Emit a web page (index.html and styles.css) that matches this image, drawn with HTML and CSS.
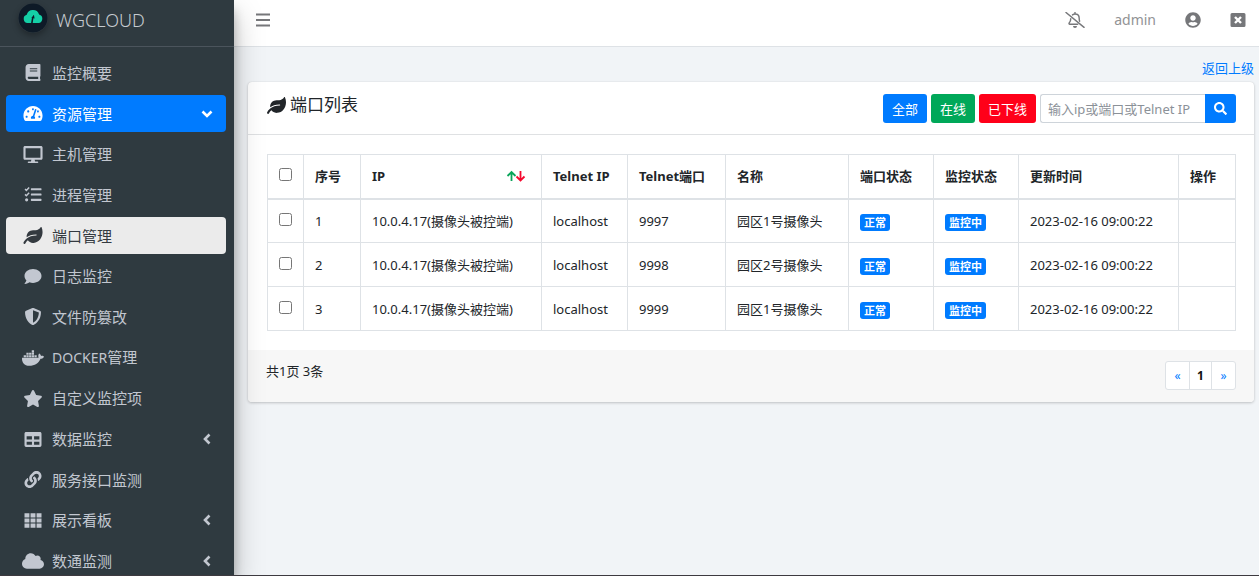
FILE: index.html
```html
<!DOCTYPE html>
<html lang="zh-CN">
<head>
<meta charset="utf-8">
<meta name="viewport" content="width=device-width, initial-scale=1">
<title>WGCLOUD</title>
<link rel="stylesheet" href="styles.css">
</head>
<body>
<svg class="sprite" aria-hidden="true">
  <symbol id="leaf" viewBox="0 0 576 512"><path d="M546.2 9.7c-5.6-12.5-21.6-13-28.3-1.2C486.9 62.4 431.4 96 368 96h-80C182 96 96 182 96 288c0 7 .8 13.7 1.5 20.5C161.3 262.8 253.4 224 384 224c8.8 0 16 7.2 16 16s-7.2 16-16 16C132.6 256 26 410.1 2.4 468c-6.6 16.3 1.2 34.9 17.5 41.6 16.4 6.8 35-1.1 41.8-17.3 1.5-3.6 20.9-47.9 71.9-90.6 32.4 43.9 94 85.8 174.9 77.2C465.5 467.5 576 326.7 576 154.3c0-50.2-10.8-102.2-29.8-144.6z"/></symbol>
  <symbol id="angle-left" viewBox="0 0 10 16"><path d="M7.5 3.5 3 8l4.500 4.500" fill="none" stroke="currentColor" stroke-width="2.600"/></symbol>
  <symbol id="cloud" viewBox="0 0 640 512"><path d="M537.6 226.6c4.1-10.7 6.4-22.4 6.400-34.600 0-53-43-96-96-96-19.700 0-38.100 6-53.300 16.200C367 64.200 315.300 32 256 32c-88.400 0-160 71.600-160 160 0 2.700.1 5.400.2 8.100C40.200 219.800 0 273.200 0 336c0 79.500 64.500 144 144 144h368c70.700 0 128-57.300 128-128 0-61.900-44-113.600-102.400-125.400z"/></symbol>
</svg>
<div class="app">
  <aside class="sidebar">
    <a class="brand" href="#">
      <svg class="logo" viewBox="0 0 30 30" aria-hidden="true"><circle cx="15" cy="15" r="14.500" fill="#0e1a27"/><path d="M9.500 20a4.200 4.200 0 0 1-.8-8.200 6.500 6.500 0 0 1 12.400-.4A4.400 4.400 0 0 1 20.500 20z" fill="#14cfa6"/><path d="m13.300 15 2.600-3.200.7 3.800-1.200-.3-.7 4.700h-1.600l.8-4.900z" fill="#0e1a27"/></svg>
      <span>WGCLOUD</span>
    </a>
    <nav class="menu">
      <a class="item" href="#"><svg class="icon" viewBox="0 0 448 512"><path d="M448 360V24c0-13.300-10.700-24-24-24H96C43 0 0 43 0 96v320c0 53 43 96 96 96h328c13.300 0 24-10.700 24-24v-16c0-7.500-3.500-14.300-8.900-18.700-4.200-15.400-4.200-59.300 0-74.700 5.400-4.300 8.900-11.100 8.900-18.600zM128 134c0-3.300 2.700-6 6-6h212c3.300 0 6 2.700 6 6v20c0 3.300-2.700 6-6 6H134c-3.300 0-6-2.700-6-6v-20zm0 64c0-3.300 2.700-6 6-6h212c3.300 0 6 2.700 6 6v20c0 3.300-2.700 6-6 6H134c-3.300 0-6-2.700-6-6v-20zm253.400 250H96c-17.700 0-32-14.300-32-32 0-17.600 14.400-32 32-32h285.400c-1.900 17.100-1.900 46.900 0 64z"/></svg><span>监控概要</span></a>
      <a class="item item-open" href="#"><svg class="icon" viewBox="0 0 576 512"><path d="M288 32C128.940 32 0 160.940 0 320c0 52.800 14.250 102.260 39.060 144.800 5.610 9.620 16.300 15.200 27.440 15.200h443c11.140 0 21.830-5.580 27.440-15.200C561.750 422.260 576 372.800 576 320c0-159.060-128.940-288-288-288zm0 64c14.710 0 26.580 10.130 30.320 23.650-1.110 2.260-2.640 4.230-3.450 6.670l-9.220 27.670c-5.130 3.490-10.970 6.010-17.640 6.010-17.670 0-32-14.330-32-32S270.330 96 288 96zM96 384c-17.670 0-32-14.330-32-32s14.330-32 32-32 32 14.330 32 32-14.330 32-32 32zm48-160c-17.670 0-32-14.330-32-32s14.330-32 32-32 32 14.330 32 32-14.330 32-32 32zm246.770-72.410l-61.330 184C343.130 347.330 352 364.540 352 384c0 11.720-3.380 22.550-8.880 32H232.880c-5.500-9.450-8.880-20.280-8.880-32 0-33.940 26.500-61.430 59.900-63.590l61.340-184.010c4.170-12.560 17.730-19.450 30.360-15.170 12.570 4.190 19.350 17.790 15.170 30.360zm14.660 57.200l15.520-46.550c3.470-1.290 7.130-2.230 11.050-2.230 17.670 0 32 14.330 32 32s-14.330 32-32 32c-11.380-.01-20.890-6.280-26.570-15.220zM480 384c-17.670 0-32-14.330-32-32s14.330-32 32-32 32 14.330 32 32-14.330 32-32 32z"/></svg><span>资源管理</span><svg class="arrow arrow-down"><use href="#angle-left"/></svg></a>
      <a class="item" href="#"><svg class="icon" viewBox="0 0 576 512"><path d="M528 0H48C21.500 0 0 21.500 0 48v320c0 26.500 21.500 48 48 48h192l-16 48h-72c-13.300 0-24 10.700-24 24s10.700 24 24 24h272c13.300 0 24-10.700 24-24s-10.700-24-24-24h-72l-16-48h192c26.500 0 48-21.500 48-48V48c0-26.500-21.500-48-48-48zm-16 352H64V64h448v288z"/></svg><span>主机管理</span></a>
      <a class="item" href="#"><svg class="icon" viewBox="0 0 512 512"><path d="M208 64h288a16 16 0 0 1 16 16v32a16 16 0 0 1-16 16H208a16 16 0 0 1-16-16V80a16 16 0 0 1 16-16zm0 160h288a16 16 0 0 1 16 16v32a16 16 0 0 1-16 16H208a16 16 0 0 1-16-16v-32a16 16 0 0 1 16-16zm0 160h288a16 16 0 0 1 16 16v32a16 16 0 0 1-16 16H208a16 16 0 0 1-16-16v-32a16 16 0 0 1 16-16z"/><circle cx="64" cy="416" r="48"/><path d="m16 92 40 40 84-88M16 252l40 40 84-88" fill="none" stroke="currentColor" stroke-width="44"/></svg><span>进程管理</span></a>
      <a class="item item-current" href="#" aria-current="page"><svg class="icon"><use href="#leaf"/></svg><span>端口管理</span></a>
      <a class="item" href="#"><svg class="icon" viewBox="0 0 512 512"><path d="M256 32C114.600 32 0 125.100 0 240c0 49.600 21.400 95 57 130.700C44.500 421.100 2.700 466 2.200 466.500c-2.200 2.300-2.800 5.700-1.500 8.700S4.800 480 8 480c66.300 0 116-31.800 140.600-51.400 32.700 12.300 69 19.400 107.400 19.400 141.400 0 256-93.100 256-208S397.400 32 256 32z"/></svg><span>日志监控</span></a>
      <a class="item" href="#"><svg class="icon" viewBox="0 0 512 512"><path d="M466.500 83.700l-192-80a48.150 48.150 0 0 0-36.900 0l-192 80C27.700 91.100 16 108.600 16 128c0 198.500 114.500 335.700 221.500 380.300 11.800 4.900 25.100 4.900 36.900 0C360.100 472.600 496 349.300 496 128c0-19.400-11.700-36.900-29.500-44.300zM256.100 446.300l-.1-381 175.900 73.300c-3.300 151.400-82.100 261.100-175.800 307.700z"/></svg><span>文件防篡改</span></a>
      <a class="item" href="#"><svg class="icon icon-wide" viewBox="0 0 640 512"><path d="M349.900 236.300h-66.100v-59.400h66.100v59.400zm0-204.300h-66.100v60.700h66.100V32zm78.200 144.800H362v59.400h66.100v-59.400zm-156.300-72.100h-66.100v60.100h66.100v-60.100zm78.100 0h-66.100v60.100h66.100v-60.100zm276.800 100c-14.400-9.700-47.600-13.200-73.100-8.400-3.300-24-16.700-44.900-41.100-63.700l-14-9.300-9.300 14c-18.400 27.800-23.400 73.600-3.700 103.800-8.700 4.700-25.800 11.100-48.400 10.700H2.400c-8.700 50.800 5.800 116.800 44 162.100 37.100 43.900 92.700 66.200 165.400 66.200 157.400 0 273.900-72.500 328.400-204.200 21.400.4 67.600.1 91.300-45.200 1.500-2.500 6.600-13.200 8.500-17.100l-13.300-8.900zm-511.100-27.900h-66v59.400h66.100v-59.400zm78.100 0h-66.100v59.400h66.100v-59.400zm78.100 0h-66.100v59.400h66.100v-59.400zm-78.100-72.100h-66.100v60.100h66.100v-60.100z"/></svg><span><span class="latin">DOCKER</span>管理</span></a>
      <a class="item" href="#"><svg class="icon" viewBox="0 0 576 512"><path d="M259.300 17.800L194 150.200 47.900 171.500c-26.200 3.800-36.700 36.100-17.700 54.600l105.700 103-25 145.500c-4.500 26.300 23.200 46 46.400 33.700L288 439.600l130.700 68.700c23.200 12.200 50.900-7.400 46.400-33.700l-25-145.500 105.700-103c19-18.500 8.500-50.800-17.700-54.600L382 150.200 316.700 17.800c-11.700-23.600-45.600-23.900-57.400 0z"/></svg><span>自定义监控项</span></a>
      <a class="item" href="#"><svg class="icon" viewBox="0 0 512 512"><path d="M464 32H48C21.490 32 0 53.490 0 80v352c0 26.510 21.490 48 48 48h416c26.510 0 48-21.490 48-48V80c0-26.510-21.490-48-48-48zM224 416H64v-96h160v96zm0-160H64v-96h160v96zm224 160H288v-96h160v96zm0-160H288v-96h160v96z"/></svg><span>数据监控</span><svg class="arrow"><use href="#angle-left"/></svg></a>
      <a class="item" href="#"><svg class="icon" viewBox="0 0 512 512"><path d="M326.612 185.391c59.747 59.809 58.927 155.698.36 214.590-.11.12-.24.25-.36.37l-67.200 67.200c-59.270 59.270-155.699 59.262-214.960 0-59.270-59.260-59.270-155.700 0-214.960l37.106-37.106c9.840-9.840 26.786-3.300 27.294 10.606.648 17.722 3.826 35.527 9.690 52.721 1.986 5.822.567 12.262-3.783 16.612l-13.087 13.087c-28.026 28.026-28.905 73.660-1.155 101.960 28.024 28.579 74.086 28.749 102.325.51l67.200-67.190c28.191-28.191 28.073-73.757 0-101.830-3.701-3.694-7.429-6.564-10.341-8.569a16.037 16.037 0 0 1-6.947-12.606c-.396-10.567 3.348-21.456 11.698-29.806l21.054-21.055c5.521-5.521 14.182-6.199 20.584-1.731a152.482 152.482 0 0 1 20.522 17.197zM467.547 44.449c-59.261-59.262-155.690-59.270-214.960 0l-67.200 67.200c-.12.12-.25.25-.36.37-58.566 58.892-59.387 154.781.36 214.590a152.454 152.454 0 0 0 20.521 17.196c6.402 4.468 15.064 3.789 20.584-1.731l21.054-21.055c8.350-8.350 12.094-19.239 11.698-29.806a16.037 16.037 0 0 0-6.947-12.606c-2.912-2.005-6.640-4.875-10.341-8.569-28.073-28.073-28.191-73.639 0-101.830l67.200-67.190c28.239-28.239 74.300-28.069 102.325.51 27.750 28.300 26.872 73.934-1.155 101.960l-13.087 13.087c-4.350 4.350-5.769 10.790-3.783 16.612 5.864 17.194 9.042 34.999 9.690 52.721.509 13.906 17.454 20.446 27.294 10.606l37.106-37.106c59.271-59.259 59.271-155.699.001-214.959z"/></svg><span>服务接口监测</span></a>
      <a class="item" href="#"><svg class="icon" viewBox="0 0 512 512"><path d="M0 40h148v124H0zm182 0h148v124H182zm182 0h148v124H364zM0 194h148v124H0zm182 0h148v124H182zm182 0h148v124H364zM0 348h148v124H0zm182 0h148v124H182zm182 0h148v124H364z"/></svg><span>展示看板</span><svg class="arrow"><use href="#angle-left"/></svg></a>
      <a class="item" href="#"><svg class="icon icon-wide"><use href="#cloud"/></svg><span>数通监测</span><svg class="arrow"><use href="#angle-left"/></svg></a>
    </nav>
  </aside>

  <div class="content">
    <header class="topbar">
      <button class="plain" type="button" aria-label="菜单"><svg class="glyph" viewBox="0 0 16 16"><path d="M1 2.500h14M1 8h14M1 13.500h14" stroke="currentColor" stroke-width="2"/></svg></button>
      <div class="tools">
        <button class="plain" type="button" aria-label="通知"><svg class="bell" viewBox="0 0 640 512"><path d="M32 16 610 492" stroke="currentColor" stroke-width="46" stroke-linecap="round"/><path d="M240 92c22-16 48-28 80-28 78 0 134 58 134 134 0 42 5 74 14 98M184 214c-2 78-24 110-50 138 -10 12-5 40 18 40h254M320 16v44" fill="none" stroke="currentColor" stroke-width="46" stroke-linecap="round"/><path d="M256 448h128a64 64 0 0 1-128 0z"/></svg></button>
        <a class="user" href="#">admin</a>
        <a class="plain" href="#" aria-label="账号"><svg class="glyph" viewBox="0 0 496 512"><path d="M248 8C111 8 0 119 0 256s111 248 248 248 248-111 248-248S385 8 248 8zm0 96c48.600 0 88 39.400 88 88s-39.400 88-88 88-88-39.400-88-88 39.400-88 88-88zm0 344c-58.700 0-111.300-26.600-146.500-68.200 18.800-35.400 55.600-59.800 98.500-59.800 2.400 0 4.800.4 7.100 1.100 13 4.200 26.600 6.900 40.900 6.900s28-2.700 40.900-6.900c2.300-.7 4.700-1.100 7.100-1.100 42.900 0 79.700 24.400 98.500 59.800C359.300 421.400 306.700 448 248 448z"/></svg></a>
        <a class="plain" href="#" aria-label="退出"><svg class="glyph" viewBox="0 0 16 16"><path d="M2 1h12a1.500 1.500 0 0 1 1.500 1.500v11A1.500 1.500 0 0 1 14 15H2a1.500 1.500 0 0 1-1.500-1.500v-11A1.500 1.500 0 0 1 2 1z"/><path d="m5 5 6 6m0-6-6 6" stroke="#fff" stroke-width="2.400"/></svg></a>
      </div>
    </header>

    <main class="page">
      <a class="back" href="#">返回上级</a>
      <section class="card">
        <div class="card-head">
          <h1 class="title"><svg class="title-icon"><use href="#leaf"/></svg>端口列表</h1>
          <form class="filters">
            <button class="btn btn-blue" type="button">全部</button>
            <button class="btn btn-green" type="button">在线</button>
            <button class="btn btn-red" type="button">已下线</button>
            <div class="search">
              <input class="search-box" type="text" aria-label="搜索" placeholder="输入ip或端口或Telnet IP">
              <button class="search-btn" type="submit" aria-label="搜索"><svg class="search-icon" viewBox="0 0 512 512"><path d="M505 442.700L405.300 343c-4.500-4.500-10.600-7-17-7H372c27.600-35.300 44-79.700 44-128C416 93.100 322.900 0 208 0S0 93.100 0 208s93.100 208 208 208c48.300 0 92.700-16.400 128-44v16.300c0 6.400 2.500 12.500 7 17l99.700 99.700c9.400 9.400 24.600 9.400 33.900 0l28.300-28.300c9.400-9.400 9.400-24.600.1-34zM208 336c-70.700 0-128-57.200-128-128 0-70.700 57.200-128 128-128 70.700 0 128 57.200 128 128 0 70.700-57.200 128-128 128z"/></svg></button>
            </div>
          </form>
        </div>
        <div class="card-body">
          <table class="grid">
            <colgroup><col class="c-check"><col class="c-no"><col class="c-ip"><col class="c-host"><col class="c-port"><col class="c-name"><col class="c-state"><col class="c-state"><col class="c-time"><col class="c-no"></colgroup>
            <thead>
              <tr>
                <th><input class="check" type="checkbox" aria-label="全选"></th>
                <th>序号</th>
                <th><div class="sortable">IP<svg class="sort" viewBox="0 0 20 14"><g fill="none" stroke-width="1.800"><path d="M5.500 12V3M1.500 7l4-4 4 4" stroke="#0aa55a"/><path d="M14.500 2v9M10.500 7.500l4 4 4-4" stroke="#f5082e"/></g></svg></div></th>
                <th>Telnet IP</th>
                <th>Telnet端口</th>
                <th>名称</th>
                <th>端口状态</th>
                <th>监控状态</th>
                <th>更新时间</th>
                <th>操作</th>
              </tr>
            </thead>
            <tbody>
              <tr><td><input class="check" type="checkbox" aria-label="选择1"></td><td>1</td><td>10.0.4.17(摄像头被控端)</td><td>localhost</td><td>9997</td><td>园区1号摄像头</td><td><span class="badge">正常</span></td><td><span class="badge">监控中</span></td><td>2023-02-16 09:00:22</td><td></td></tr>
              <tr><td><input class="check" type="checkbox" aria-label="选择2"></td><td>2</td><td>10.0.4.17(摄像头被控端)</td><td>localhost</td><td>9998</td><td>园区2号摄像头</td><td><span class="badge">正常</span></td><td><span class="badge">监控中</span></td><td>2023-02-16 09:00:22</td><td></td></tr>
              <tr><td><input class="check" type="checkbox" aria-label="选择3"></td><td>3</td><td>10.0.4.17(摄像头被控端)</td><td>localhost</td><td>9999</td><td>园区1号摄像头</td><td><span class="badge">正常</span></td><td><span class="badge">监控中</span></td><td>2023-02-16 09:00:22</td><td></td></tr>
            </tbody>
          </table>
        </div>
        <div class="card-foot">
          <span class="total">共1页 3条</span>
          <nav class="pager" aria-label="分页">
            <a class="page-link" href="#">«</a>
            <a class="page-link page-now" href="#">1</a>
            <a class="page-link" href="#">»</a>
          </nav>
        </div>
      </section>
    </main>
  </div>
</div>
</body>
</html>
```

FILE: styles.css
```css
* {
  box-sizing: border-box;
}

body {
  margin: 0;
  color: #212529;
  font: 13px/20px "Noto Sans", "Noto Sans CJK SC", sans-serif;
}

a {
  color: #007bff;
  text-decoration: none;
}

svg {
  display: block;
  flex: none;
  fill: currentColor;
}

.sprite {
  display: none;
}

.app {
  display: flex;
  height: 100vh;
  overflow: hidden;
  background: #f1f4f7;
  border-bottom: 1px solid #3d3a40;
}

/* Sidebar */

.sidebar {
  z-index: 1;
  flex: none;
  width: 234px;
  background: #2f3a40;
  box-shadow: 0 14px 28px rgba(0, 0, 0, 0.25), 0 10px 10px rgba(0, 0, 0, 0.22);
}

.brand {
  display: flex;
  align-items: center;
  gap: 8px;
  height: 47px;
  padding: 0 18px 6px;
  border-bottom: 1px solid #4b545c;
  color: #c6cbd0;
  font-size: 18px;
  font-weight: 300;
}

.logo {
  width: 30px;
  height: 30px;
  margin-bottom: 4px;
  border-radius: 50%;
  box-shadow: 0 3px 6px rgba(0, 0, 0, 0.3);
}

.menu {
  display: grid;
  grid-auto-rows: 1fr;
  gap: 3px;
  height: 533px;
  padding: 7px 8px 0 6px;
}

.item {
  display: flex;
  align-items: center;
  gap: 8px;
  padding: 0 14px 0 16px;
  border-radius: 4px;
  color: #c2c7d0;
  font-size: 15px;
}

.item-open {
  background: #007bff;
  color: #fff;
}

.item-current {
  background: #ebebeb;
  color: #343a40;
}

.latin {
  font-size: 14px;
}

.icon {
  width: 22px;
  height: 17px;
}

.icon-wide {
  height: 18px;
}

.arrow {
  width: 10px;
  height: 16px;
  margin-left: auto;
}

.arrow-down {
  transform: rotate(-90deg);
}

/* Top bar */

.content {
  flex: 1;
  min-width: 0;
}

.topbar {
  display: flex;
  align-items: center;
  justify-content: space-between;
  height: 47px;
  padding: 0 13px 7px 21px;
  background: #fff;
  border-bottom: 1px solid #dee2e6;
}

.tools {
  display: flex;
  align-items: center;
  gap: 29px;
}

.plain {
  padding: 0;
  border: 0;
  background: none;
  color: #76777a;
}

.glyph {
  width: 16px;
  height: 16px;
}

.bell {
  width: 20px;
  height: 16px;
}

.user {
  color: #929395;
  font-size: 14px;
}

/* Page */

.page {
  display: flex;
  flex-direction: column;
  padding: 11px 5px 0 14px;
}

.back {
  align-self: flex-end;
  margin-bottom: 4px;
}

.card {
  background: #fff;
  border-radius: 4px;
  box-shadow: 0 0 1px rgba(0, 0, 0, 0.13), 0 1px 3px rgba(0, 0, 0, 0.2);
}

.card-head {
  display: flex;
  justify-content: space-between;
  padding: 12px 18px 11px 19px;
  border-bottom: 1px solid #dfe1e3;
}

.title {
  display: flex;
  align-items: center;
  gap: 4px;
  margin: 0;
  height: 22px;
  font-size: 17px;
  font-weight: 400;
}

.title-icon {
  width: 19px;
  height: 17px;
}

.filters {
  display: flex;
  gap: 4px;
}

.btn {
  height: 29px;
  padding: 0 9px;
  border: 0;
  border-radius: 3px;
  color: #fff;
  font: inherit;
}

.btn-blue {
  background: #007bff;
}

.btn-green {
  background: #00a859;
}

.btn-red {
  background: #ff0019;
}

.search {
  display: flex;
}

.search-box {
  width: 165px;
  height: 29px;
  padding: 0 7px;
  border: 1px solid #ced4da;
  border-right: 0;
  border-radius: 3px 0 0 3px;
  font: inherit;
}

.search-box::placeholder {
  color: #8b9198;
}

.search-btn {
  display: grid;
  place-items: center;
  width: 31px;
  padding: 0;
  border: 0;
  border-radius: 0 3px 3px 0;
  background: #007bff;
  color: #fff;
}

.search-icon {
  width: 13px;
  height: 13px;
}

.card-body {
  padding: 19px 18px 19px 19px;
}

.grid {
  width: 100%;
  table-layout: fixed;
  border-collapse: collapse;
}

.grid th,
.grid td {
  height: 44px;
  padding: 0 11px;
  border: 1px solid #dee2e6;
  text-align: left;
  white-space: nowrap;
}

.grid th {
  border-bottom-width: 2px;
  font-weight: 700;
}

.c-check { width: 36px; }
.c-no { width: 57px; }
.c-ip { width: 181px; }
.c-host { width: 86px; }
.c-port { width: 98px; }
.c-name { width: 123px; }
.c-state { width: 85px; }
.c-time { width: 160px; }

.check {
  display: block;
  width: 13px;
  height: 13px;
  margin: 0 0 3px;
}

.sortable {
  display: flex;
  align-items: center;
  justify-content: space-between;
}

.sort {
  width: 20px;
  height: 14px;
  margin-right: 4px;
}

.badge {
  display: inline-block;
  padding: 0 4px;
  border-radius: 3px;
  background: #007bff;
  color: #fff;
  font-size: 11px;
  font-weight: 700;
  line-height: 17px;
  vertical-align: middle;
}

.card-foot {
  display: flex;
  justify-content: space-between;
  padding: 11px 18px 12px 18px;
  border-radius: 0 0 4px 4px;
  background: #f7f7f7;
}

.pager {
  display: flex;
  border: 1px solid #dee2e6;
  border-radius: 3px;
  background: #fff;
}

.page-link {
  width: 23px;
  font-size: 12px;
  line-height: 27px;
  text-align: center;
}

.page-now {
  border: solid #dee2e6;
  border-width: 0 1px;
  color: #111;
  font-weight: 700;
}
```
